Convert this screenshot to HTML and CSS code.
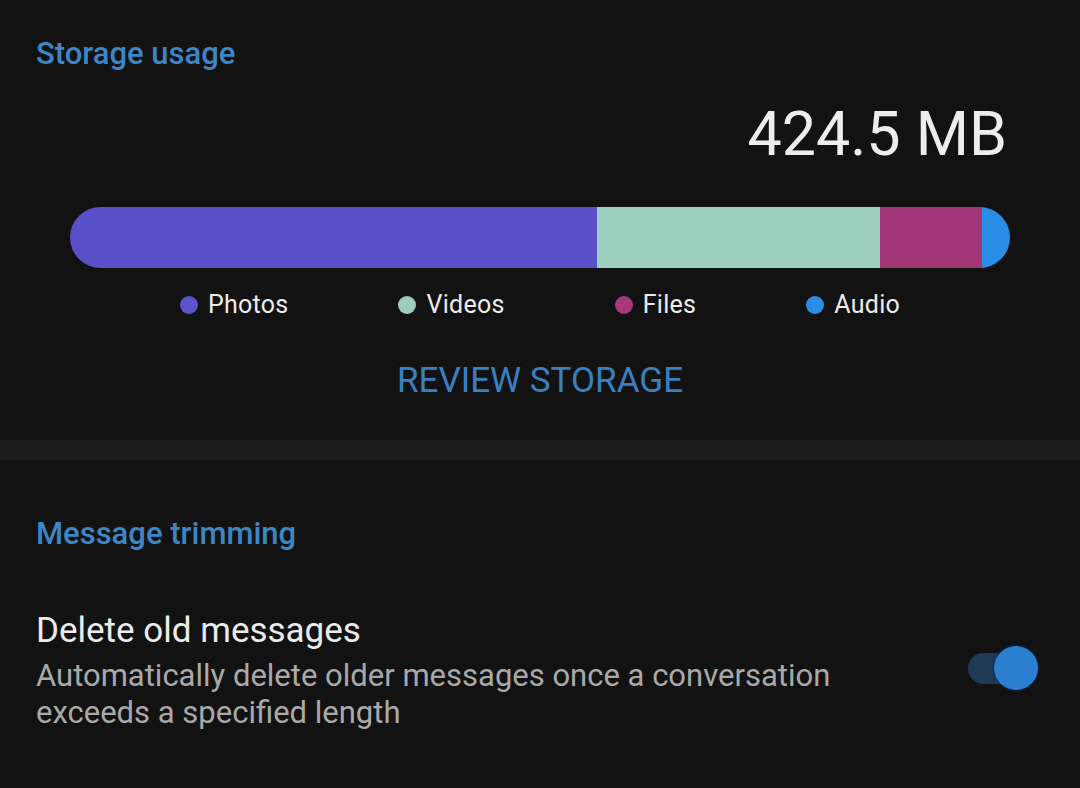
FILE: index.html
```html
<!DOCTYPE html>
<html lang="en">
<head>
<meta charset="utf-8">
<title>Storage</title>
<link rel="stylesheet" href="styles.css">
</head>
<body>
<section class="storage">
  <h2 class="section-title">Storage usage</h2>
  <div class="total">424.5 MB</div>
  <div class="bar">
    <div class="seg seg-photos" style="width:56.1%"></div>
    <div class="seg seg-videos" style="width:30.1%"></div>
    <div class="seg seg-files" style="width:10.8%"></div>
    <div class="seg seg-audio" style="width:3.0%"></div>
  </div>
  <ul class="legend">
    <li class="legend-item"><span class="dot dot-photos"></span>Photos</li>
    <li class="legend-item"><span class="dot dot-videos"></span>Videos</li>
    <li class="legend-item"><span class="dot dot-files"></span>Files</li>
    <li class="legend-item"><span class="dot dot-audio"></span>Audio</li>
  </ul>
  <div class="review">REVIEW STORAGE</div>
</section>
<div class="divider"></div>
<section class="trim">
  <h2 class="section-title trim-title">Message trimming</h2>
  <div class="setting-row">
    <div class="setting-text">
      <div class="setting-name">Delete old messages</div>
      <div class="setting-desc">Automatically delete older messages once a conversation exceeds a specified length</div>
    </div>
    <div class="switch">
      <div class="switch-track"></div>
      <div class="switch-thumb"></div>
    </div>
  </div>
</section>
</body>
</html>
```

FILE: styles.css
```css
* { box-sizing: border-box; }
html, body {
  margin: 0;
  padding: 0;
  background: #121212;
  font-family: Roboto, "Noto Sans", "Liberation Sans", sans-serif;
  color: #e8e8e8;
  height: 788px;
  overflow: hidden;
}
.storage {
  padding: 36px 70px 39px 36px;
  display: flex;
  flex-direction: column;
}
.section-title {
  margin: 0;
  font-size: 31px;
  line-height: 36px;
  font-weight: 500;
  color: #3d86c6;
}
.total {
  margin-top: 26px;
  font-size: 61px;
  line-height: 72px;
  text-align: right;
  color: #ededed;
  padding-right: 3px;
}
.bar {
  margin-top: 37px;
  margin-left: 34px;
  height: 61px;
  border-radius: 31px;
  overflow: hidden;
  display: flex;
}
.seg { height: 100%; }
.seg-photos { background: #5a50c9; }
.seg-videos { background: #9dcfbf; }
.seg-files { background: #a13676; }
.seg-audio { background: #2b8ee6; }
.legend {
  list-style: none;
  margin: 22px 0 0 34px;
  padding: 0;
  display: flex;
  justify-content: space-evenly;
  font-size: 25px;
  line-height: 30px;
  letter-spacing: 0.3px;
  color: #ececec;
}
.legend-item {
  display: flex;
  align-items: center;
  gap: 10px;
}
.dot {
  width: 18px;
  height: 18px;
  border-radius: 50%;
  display: inline-block;
}
.dot-photos { background: #5d53cc; }
.dot-videos { background: #9dcfbf; }
.dot-files { background: #a8387c; }
.dot-audio { background: #2b8ee6; }
.review {
  margin-top: 41px;
  margin-left: 34px;
  text-align: center;
  font-size: 35px;
  line-height: 40px;
  color: #3a7fc0;
}
.divider {
  height: 20px;
  background: #1b1b1b;
}
.trim {
  padding: 56px 42px 0 36px;
}
.setting-row {
  margin-top: 59px;
  display: flex;
  align-items: flex-start;
  justify-content: space-between;
}
.setting-name {
  font-size: 35px;
  line-height: 40px;
  color: #ececec;
}
.setting-desc {
  margin-top: 6px;
  font-size: 31px;
  line-height: 37px;
  color: #a9a9a9;
  max-width: 830px;
}
.switch {
  position: relative;
  width: 70px;
  height: 44px;
  margin-top: 35px;
  flex-shrink: 0;
}
.switch-track {
  position: absolute;
  left: 0;
  top: 7px;
  width: 62px;
  height: 31px;
  border-radius: 16px;
  background: #1e3a55;
}
.switch-thumb {
  position: absolute;
  right: 0;
  top: 0;
  width: 44px;
  height: 44px;
  border-radius: 50%;
  background: #2a7fd0;
  box-shadow: 0 0 2px 1px rgba(0, 40, 80, 0.8);
}
```
